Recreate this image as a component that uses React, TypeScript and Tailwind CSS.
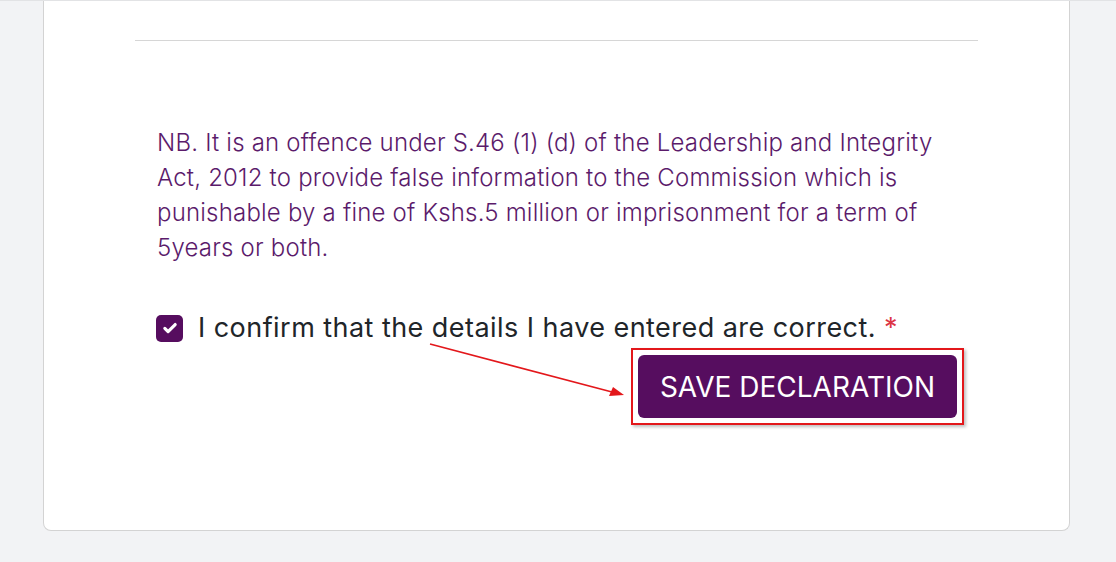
export default function App() {
  return (
    <div
      className="relative min-h-[562px] bg-[#f2f3f5] border-t border-[#e2e3e5] pl-[43px] pr-[46px]"
      style={{ fontFamily: "Inter, 'Noto Sans', sans-serif" }}
    >
      <div className="h-[530px] bg-white border-x border-b border-[#d3d3d3] rounded-b-[8px]">
        <div className="mx-[91px] pt-[39px]">
          <hr className="border-0 border-t border-[#d6d6d6]" />

          {/* legal notice */}
          <p className="mt-[84px] px-[22px] text-[24px] font-light leading-[35px] tracking-[0.2px] text-[#5b1b6b]">
            NB. It is an offence under S.46 (1) (d) of the Leadership and Integrity Act, 2012 to
            provide false information to the Commission which is punishable by a fine of Kshs.5
            million or imprisonment for a term of 5years or both.
          </p>

          <label className="mt-[46px] flex items-center gap-[15px] px-[21px] text-[27px] leading-[34px] tracking-[0.45px] text-[#212529]">
            <span className="flex h-[27px] w-[27px] shrink-0 items-center justify-center rounded-[5px] bg-[#560d5f]">
              <svg viewBox="0 0 16 16" className="h-[18px] w-[18px]" fill="none">
                <path
                  d="M3.4 8.3l2.9 2.9L12.6 4.9"
                  stroke="white"
                  strokeWidth="2.8"
                  strokeLinecap="round"
                  strokeLinejoin="round"
                />
              </svg>
            </span>
            <span>
              I confirm that the details I have entered are correct.{" "}
              <span className="text-[#dc3545]">*</span>
            </span>
          </label>

          <div className="mt-[3px] mr-[14px] flex justify-end">
            <div className="border-2 border-[#e3171b] p-[5px] shadow-[2px_2px_3px_rgba(0,0,0,0.25)]">
              <button className="flex h-[63px] items-center rounded-[6px] bg-[#560d5f] px-[22px] text-[28px] text-white">
                SAVE DECLARATION
              </button>
            </div>
          </div>
        </div>
      </div>

      {/* annotation arrow */}
      <svg
        className="pointer-events-none absolute left-0 top-0"
        width="1116"
        height="562"
        viewBox="0 0 1116 562"
      >
        <line x1="430" y1="343" x2="612" y2="391" stroke="#e3171b" strokeWidth="1.6" />
        <path d="M624 394 L609 395 L613 386 Z" fill="#e3171b" />
      </svg>
    </div>
  );
}
